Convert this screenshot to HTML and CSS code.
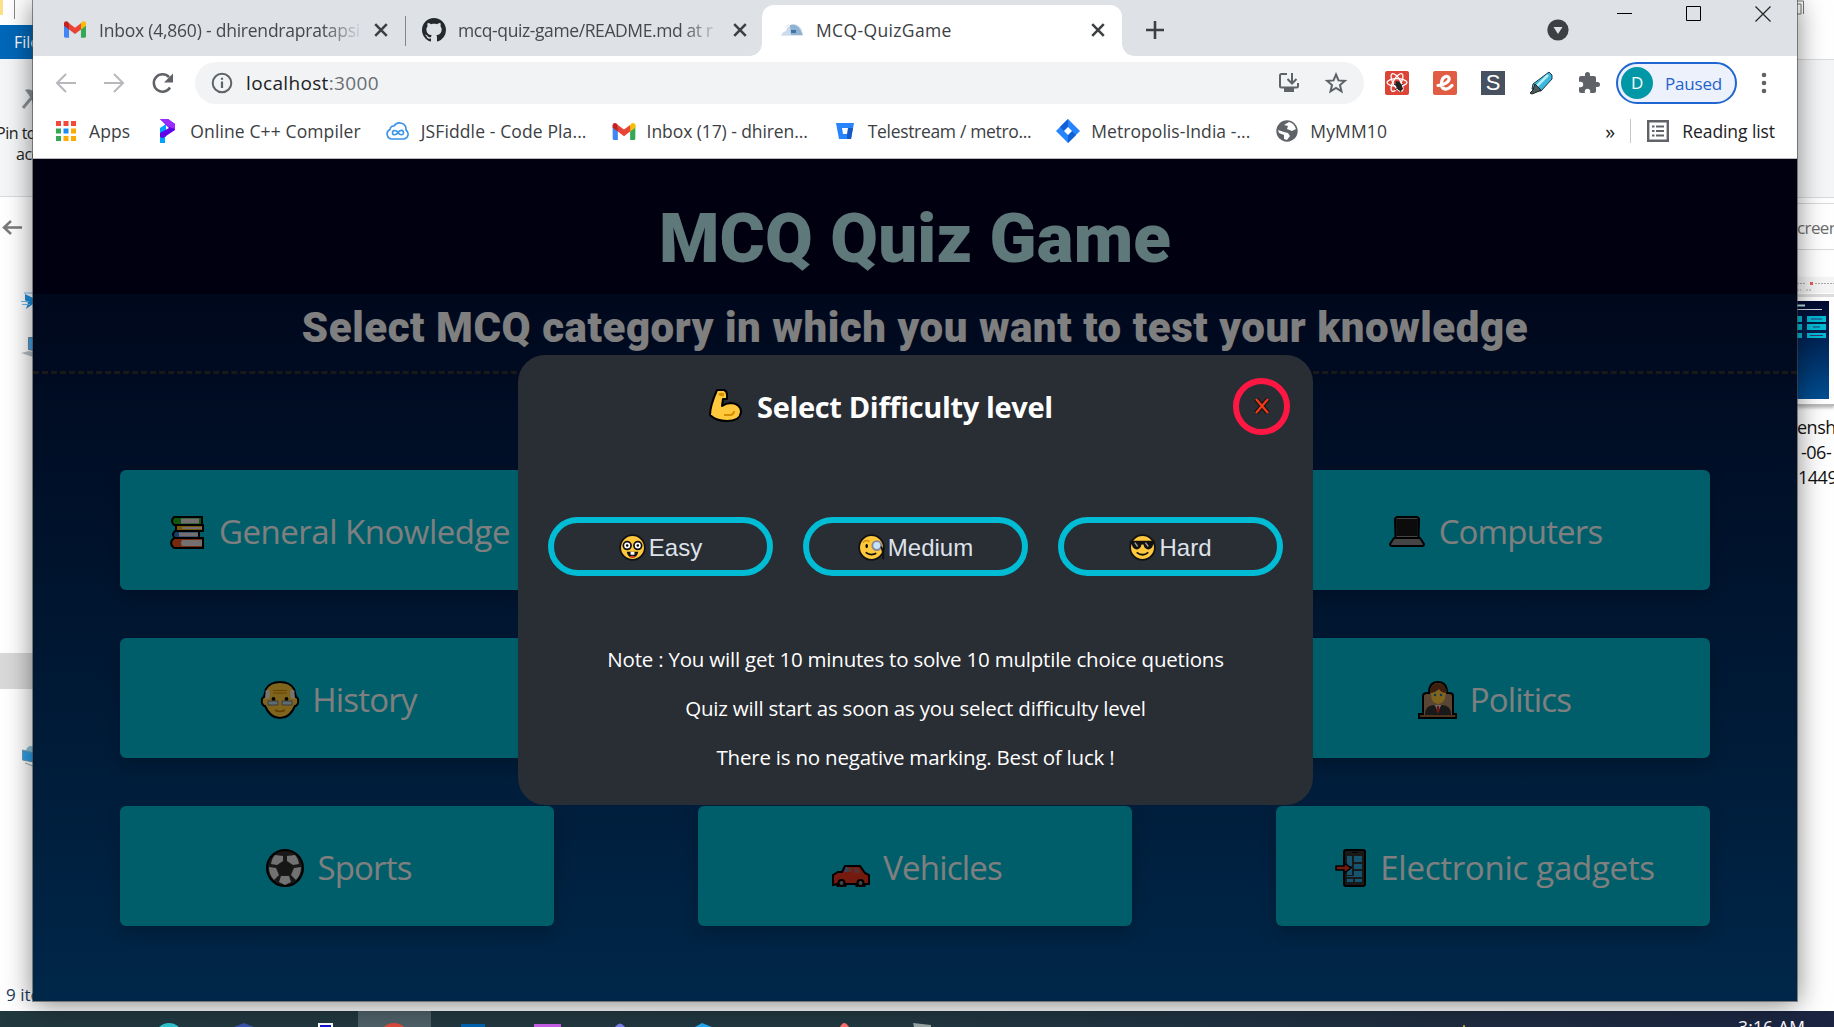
FILE: index.html
```html
<!DOCTYPE html>
<html lang="en">
<head>
<meta charset="utf-8">
<title>MCQ-QuizGame</title>
<link rel="stylesheet" href="styles.css">
</head>
<body>
<svg class="defs" width="0" height="0">
  <symbol id="gmail" viewBox="0 0 24 18">
    <path d="M0 2v14.400q0 1.600 1.600 1.600H5.500V6z" fill="#4285f4"/>
    <path d="M24 2v14.400q0 1.600-1.600 1.600H18.500V6z" fill="#34a853"/>
    <path d="M18.500 2.200V9L24 4.900V2.500C24 .2 21.500-.7 19.600.7z" fill="#fbbc04"/>
    <path d="M5.500 9V2.200L12 7l6.500-4.800V9L12 13.900z" fill="#ea4335"/>
    <path d="M0 2.500v2.400L5.500 9V2.200L4.400.7C2.500-.7 0 .2 0 2.500z" fill="#c5221f"/>
  </symbol>
  <symbol id="cross" viewBox="0 0 14 14"><path d="M2.500 2.500l9 9M11.500 2.500l-9 9" stroke="#3c4043" stroke-width="2" fill="none"/></symbol>
</svg>
<div class="desktop">
  <div class="explorer-left">
    <div class="quickbar"><i class="folder"></i><i class="tick"></i></div>
    <div class="filetab">File</div>
    <div class="ribbon">
      <svg width="33" height="36" viewBox="0 0 33 36"><path d="M23 31l10-12" stroke="#8a9399" stroke-width="3" fill="none"/><path d="M25 13q4-2 8 1v13q-2-7-8-14z" fill="#8a9399"/></svg>
      <span class="pin">Pin to</span><span class="acc">acc</span>
    </div>
    <svg class="sidebar" width="33" height="814" viewBox="0 197 33 814">
      <path d="M22 227.500H5M11 221l-7 6.500 7 6.500" stroke="#7a7a7a" stroke-width="2.500" fill="none"/>
      <path d="M25 294l8 4v6l-7 5 2-6-3-3z" fill="#1e90dd"/><path d="M24 293h9M21 301.500h8M22 304.500h8" stroke="#6dbcf0"/>
      <path d="M28.500 337.500h5v13l-5-1z" fill="#41a5ee" stroke="#6c8592"/><path d="M21 353l8-2 4 1v5z" fill="#b8bfc6"/>
      <path d="M0 653h33v36H0z" fill="#d9d9d9"/>
      <circle cx="31" cy="751" r="5" fill="#8cc6dc"/><path d="M22.500 750l11 3v9l-11-2z" fill="#2f9fe8" stroke="#6f9ab8"/><path d="M25 763l8 3" stroke="#99aaaa"/>
    </svg>
    <div class="count">9 items</div>
  </div>
  <div class="explorer-right">
    <div class="er-title"><svg width="9" height="18" viewBox="0 0 9 18"><path d="M0 1h6.500v13M0 4h4v10H0" stroke="#777" fill="none"/></svg></div>
    <div class="er-ribbon"></div>
    <div class="er-search">creen</div>
    <div class="er-thumb">
      <svg width="37" height="124" viewBox="0 0 37 124">
        <defs><linearGradient id="tg" x2="0" y2="1"><stop offset="0" stop-color="#000a30"/><stop offset="1" stop-color="#004e92"/></linearGradient></defs>
        <path d="M0 0h37v16H0z" fill="#f5f5f5"/><path d="M0 6.500h9M18 6.500h19M0 13h4M9 13h6" stroke="#aaa" stroke-dasharray="2 1"/><path d="M13 5h3v3h-3z" fill="#e06055"/><path d="M0 17h37v3H0z" fill="#ddd"/>
        <path d="M0 24h32v98H0z" fill="url(#tg)"/><path d="M0 28.500h8" stroke="#bfe6ea" stroke-width="2"/><path d="M0 32.500h25" stroke="#ddd"/>
        <path d="M0 39h5v6H0zM0 47h5v6H0zM0 56h5v5H0zM10 39h19v6H10zM10 47h19v6H10zM10 56h19v5H10z" fill="#00bcd4"/>
        <path d="M14 42h11M16 50h7M13 58.500h13" stroke="#333377"/>
      </svg>
    </div>
    <div class="er-name">ensh<br><span class="ind4">-06-</span><br><span class="ind1">1449</span></div>
  </div>

  <div class="taskbar">
    <svg width="1600" height="16" viewBox="0 0 1600 16">
      <path d="M358 0h73v16h-73z" fill="#4e6068"/>
      <circle cx="169" cy="26" r="14" fill="#2fc5cf"/><path d="M234 16l10-4 10 4z" fill="#3a55b0"/>
      <path d="M318 12h15v4h-15z" fill="#fff"/><path d="M320 14h11v2h-11z" fill="#1111cc"/>
      <circle cx="394" cy="27" r="15" fill="#db4a3c"/>
      <path d="M461 13h24v3h-24z" fill="#0063b1"/><path d="M534 13h27v3h-27z" fill="#c75fe8"/>
      <path d="M615 16q5-7 10 0z" fill="#7a7ff0"/><path d="M695 16l7-4 10 4z" fill="#23a9f2"/>
      <path d="M840 16q4-8 9 0z" fill="#ff6f6f"/><path d="M913 12l18 2v2h-17z" fill="#9aa5a5"/><path d="M1463 14h2v2h-2z" fill="#a5a52a"/>
    </svg>
    <span class="clock">3:16 AM</span>
  </div>

  <div class="browser">
    <div class="tabs">
      <div class="tab tab-mail">
        <svg width="22" height="17"><use href="#gmail"/></svg>
        <span class="label fade">Inbox (4,860) - dhirendrapratapsi</span>
        <svg class="x" width="18" height="18"><use href="#cross"/></svg>
      </div>
      <div class="tab tab-git">
        <svg width="24" height="24" viewBox="0 0 16 16"><path fill="#24292e" d="M8 0C3.580 0 0 3.580 0 8c0 3.540 2.290 6.530 5.470 7.590.4.070.55-.17.55-.38 0-.19-.01-.82-.01-1.490-2.010.37-2.530-.49-2.690-.94-.09-.23-.48-.94-.82-1.130-.28-.15-.68-.52-.01-.53.63-.01 1.080.58 1.230.82.72 1.210 1.870.87 2.330.66.07-.52.28-.87.51-1.070-1.780-.2-3.640-.89-3.640-3.950 0-.87.31-1.590.82-2.150-.08-.2-.36-1.020.08-2.120 0 0 .67-.21 2.200.82.64-.18 1.320-.27 2-.27s1.360.09 2 .27c1.530-1.040 2.200-.82 2.200-.82.44 1.100.16 1.920.08 2.120.51.56.82 1.270.82 2.150 0 3.070-1.870 3.750-3.650 3.950.29.25.54.73.54 1.480 0 1.070-.01 1.930-.01 2.200 0 .21.15.46.55.38A8 8 0 0 0 16 8c0-4.420-3.580-8-8-8z"/></svg>
        <span class="label fade">mcq-quiz-game/README.md at r</span>
        <svg class="x" width="18" height="18"><use href="#cross"/></svg>
      </div>
      <div class="tab active">
        <svg width="22" height="14" viewBox="0 0 22 14"><path d="M0 13q1-4 5-5 2-7 8-7 8 1 9 12z" fill="#cbdbe9"/><path d="M9 2q8-2 12 8l1 3H10z" fill="#8fb2d0"/><path d="M10 7h5v3h-5z" fill="#3d73a8"/><path d="M4 5l4-4M0 12.500h22" stroke="#dfe8f0"/></svg>
        <span class="label">MCQ-QuizGame</span>
        <svg class="x" width="18" height="18"><use href="#cross"/></svg>
      </div>
      <svg class="plus" width="18" height="18" viewBox="0 0 18 18"><path d="M9 0v18M0 9h18" stroke="#3c4043" stroke-width="2.600"/></svg>
      <svg class="drop" width="22" height="22" viewBox="0 0 22 22"><circle cx="11" cy="11" r="10.600" fill="#3c4043"/><path d="M6.500 8h9L11 15z" fill="#dee1e6"/></svg>
      <div class="winbtns">
        <svg width="16" height="16" viewBox="0 0 16 16"><path d="M0 7.500h15" stroke="#000"/></svg>
        <svg width="16" height="16" viewBox="0 0 16 16"><path d="M.5.5h14v14H.5z" stroke="#000" fill="none"/></svg>
        <svg width="16" height="16" viewBox="0 0 16 16"><path d="M.5.5l15 15M15.500.5l-15 15" stroke="#222" stroke-width="1.200"/></svg>
      </div>
    </div>

    <div class="toolbar">
      <svg width="28" height="28" viewBox="0 0 28 28"><path d="M24 14H5M14 5l-9 9 9 9" stroke="#b6b8bb" stroke-width="2" fill="none"/></svg>
      <svg width="28" height="28" viewBox="0 0 28 28"><path d="M4 14h19M14 5l9 9-9 9" stroke="#b6b8bb" stroke-width="2" fill="none"/></svg>
      <svg width="28" height="28" viewBox="0 0 28 28"><path d="M22 18.500A8.700 8.700 0 1 1 21 8.200" stroke="#5f6368" stroke-width="2.500" fill="none"/><path d="M25 4.500v9h-9z" fill="#5f6368"/></svg>
      <div class="omnibox">
        <svg width="22" height="22" viewBox="0 0 22 22"><circle cx="11" cy="11" r="9.300" stroke="#5f6368" stroke-width="2" fill="none"/><path d="M11 9.500V16M11 5.800v2" stroke="#5f6368" stroke-width="2.200"/></svg>
        <span class="url">localhost<span>:3000</span></span>
        <svg class="install" width="22" height="22" viewBox="0 0 22 22"><path d="M9 2H3.500Q2 2 2 3.500V14q0 1.500 1.500 1.500h15Q20 15.500 20 14v-3" stroke="#5f6368" stroke-width="2" fill="none"/><path d="M6 16h10v4H6z" fill="#5f6368"/><path d="M14 1v9.500M9.500 7l4.500 4.500L18.500 7" stroke="#5f6368" stroke-width="2" fill="none"/></svg>
        <svg width="24" height="24" viewBox="0 0 24 24"><path d="M12 3.500l2.500 5.900 6.400.5-4.900 4.200 1.500 6.300L12 17l-5.500 3.400L8 14.100 3.100 9.900l6.400-.5z" stroke="#5f6368" stroke-width="2" fill="none"/></svg>
      </div>
      <div class="exts">
        <svg width="24" height="24" viewBox="0 0 24 24"><rect width="24" height="24" rx="2" fill="#db4437"/><g fill="none" stroke="#fff" stroke-width="1.300"><ellipse cx="12" cy="11.500" rx="10" ry="3.800"/><ellipse cx="12" cy="11.500" rx="10" ry="3.800" transform="rotate(60 12 11.500)"/><ellipse cx="12" cy="11.500" rx="10" ry="3.800" transform="rotate(120 12 11.500)"/></g><ellipse cx="14" cy="15" rx="2.800" ry="5" fill="#222" transform="rotate(-25 14 15)"/><path d="M9 13l9 5M10 19l8-6M11 10l5 11" stroke="#222"/></svg>
        <svg width="24" height="24" viewBox="0 0 24 24"><rect width="24" height="24" rx="2" fill="#e05d44"/><path d="M5 14.500C12 14 17 10 16 7c-1-3-7-2-7.500 5C8 19 14 20 19 14.500" stroke="#fff" stroke-width="3.200" fill="none" stroke-linecap="round"/></svg>
        <span class="ext-s">S</span>
        <svg width="24" height="24" viewBox="0 0 24 24"><path d="M20 1l3 3v4L12 20H8l-5-2 1-5z" fill="#39b8dc" stroke="#223344"/><path d="M19 4L8 15" stroke="#b9edf8" stroke-width="2.500"/><path d="M6 13l6 6-4 2-5 2-2-1 3-3z" fill="#4a5b5f" stroke="#222"/></svg>
        <svg width="24" height="24" viewBox="0 0 24 24"><path fill="#5f6368" d="M20.500 11H19V7c0-1.100-.9-2-2-2h-4V3.500a2.500 2.500 0 0 0-5 0V5H4c-1.100 0-2 .9-2 2v3.800h1.500a2.700 2.700 0 0 1 0 5.400H2V20c0 1.100.9 2 2 2h3.800v-1.500a2.700 2.700 0 0 1 5.400 0V22H17c1.100 0 2-.9 2-2v-4h1.500a2.500 2.500 0 0 0 0-5z"/></svg>
      </div>
      <div class="profile"><b>D</b><span>Paused</span></div>
      <svg class="dots" width="24" height="24" viewBox="0 0 24 24"><g fill="#5f6368"><circle cx="12" cy="4" r="2.300"/><circle cx="12" cy="12" r="2.300"/><circle cx="12" cy="20" r="2.300"/></g></svg>
    </div>

    <div class="bookmarks">
      <a><svg width="24" height="24" viewBox="0 0 24 24"><path d="M2 2h5v5H2zM9.500 2h5v5h-5zM17 2h5v5h-5z" fill="#f4483b"/><path d="M2 9.500h5v5H2zM2 17h5v5H2z" fill="#34a853"/><path d="M9.500 9.500h5v5h-5z" fill="#1a8cf0"/><path d="M17 9.500h5v5h-5zM9.500 17h5v5h-5zM17 17h5v5h-5z" fill="#fbab04"/></svg><span class="ls1">Apps</span></a>
      <a><svg width="24" height="24" viewBox="0 0 24 24"><path d="M5 9l6-4v13l-1 0v6H5z" fill="#00a2ff"/><path d="M5 0h8l7 5v6L8 19l-3-1v-4l9-5z" fill="#6200ea"/><path d="M5 0h8l7 5v5l-6-2z" fill="#9a2bff"/></svg><span class="ls1">Online C++ Compiler</span></a>
      <a><svg width="24" height="24" viewBox="0 0 24 24"><path d="M6.500 20a5 5 0 0 1-2.500-9.500 3.500 3.500 0 0 1 4-3.500 6.500 6.500 0 0 1 12 4A5 5 0 0 1 18 20z" fill="none" stroke="#3b94e8" stroke-width="1.600"/><path d="M12 13.500c-2-3-5.500-2.500-5.500.2s3.500 3 5.500-.2 5.500-2.600 5.500.2-3.500 2.800-5.500-.2z" fill="none" stroke="#3b94e8" stroke-width="1.600"/></svg><span class="ls1">JSFiddle - Code Pla...</span></a>
      <a><svg width="24" height="17"><use href="#gmail"/></svg><span class="ls2">Inbox (17) - dhiren...</span></a>
      <a><svg width="24" height="24" viewBox="0 0 24 24"><path d="M3 4h18l-3 16H6z" fill="#2684ff"/><path d="M14 9h6l-2 11h-4z" fill="#1558c8"/><path d="M9 9h6l-1 6h-4z" fill="#fff"/></svg><span class="ls3">Telestream / metro...</span></a>
      <a><svg width="24" height="24" viewBox="0 0 24 24"><path d="M12 0l12 12-12 12L0 12z" fill="#2684ff"/><path d="M12 0v8l-4 4-4-4z" fill="#1060d8"/><path d="M12 24v-8l4-4 4 4z" fill="#1060d8"/><path d="M12 8l4 4-4 4-4-4z" fill="#fff"/></svg><span class="ls4">Metropolis-India -...</span></a>
      <a><svg width="24" height="24" viewBox="0 0 24 24"><circle cx="12" cy="12" r="10.700" fill="#5f6368"/><path d="M14 3q5 1 7 7l-4 2-5-2 1-3-4-1zM3 11l6 2 4 1 2 3-3 4-3-1v-4l-5-2z" fill="#fff"/></svg><span class="ls1">MyMM10</span></a>
      <div class="bm-end"><span class="more">»</span><i></i><svg width="22" height="22" viewBox="0 0 22 22"><path d="M1.200 1.200h19.600v19.600H1.200z" stroke="#5f6368" stroke-width="2.400" fill="none"/><path d="M5 6.500h2.500M9 6.500h8M5 11h2.500M9 11h8M5 15.500h2.500M9 15.500h8" stroke="#5f6368" stroke-width="2.200"/></svg><span class="ls2">Reading list</span></div>
    </div>

    <main class="page">
      <h1>MCQ Quiz Game</h1>
      <h2>Select MCQ category in which you want to test your knowledge</h2>
      <div class="grid">
        <div class="card wide"><svg class="emo" viewBox="0 0 46 38"><g stroke="#000" stroke-width="2"><path d="M10 4h28v8H10q-4-4 0-8z" fill="#1fae1f"/><path d="M12 12h27v6H12z" fill="#f2b200"/><path d="M11 18h24v7H11q-4-3 0-7z" fill="#2d7fd8"/><path d="M10 25h29v10H10q-6-5 0-10z" fill="#e8541a"/></g><path d="M17 5.500h18v5H17zM18 14h20v2H18zM15 19.500h19v4H15zM18 27h20v6H18q-2-3 0-6z" fill="#e8e0e4"/></svg><span>General Knowledge</span></div>
        <div class="card"></div>
        <div class="card"><svg class="emo" viewBox="0 0 46 38"><path d="M11 6h24M11 6l1 17h22l1-17z" fill="#222" stroke="#000" stroke-width="2"/><path d="M12 5.500h22v18H12z" fill="#191919" stroke="#888"/><path d="M11.500 24V6q0-2 2-2h19q2 0 2 2v18" fill="none" stroke="#000" stroke-width="2"/><path d="M10 25h26l4 6q0 2-2 2H8q-2 0-2-2z" fill="#8a8a8a" stroke="#000" stroke-width="2"/></svg><span>Computers</span></div>
        <div class="card"><svg class="emo" viewBox="0 0 46 38"><path d="M23 1q10 0 14 7l2 8q3 1 2 6-1 3-3 3-5 12-15 12T8 25q-2 0-3-3-1-5 2-6l2-8Q13 1 23 1z" fill="#ffc83d" stroke="#000" stroke-width="2"/><path d="M8.500 18V10q1-2 4-1v8zM37.500 18V10q-1-2-4-1v8z" fill="#e8e8e8"/><path d="M16 9.500h14M16 12h14" stroke="#cf8a00"/><circle cx="16.500" cy="18" r="1.900"/><circle cx="29.500" cy="18" r="1.900"/><path d="M11 20h10v4H11zM25 20h10v4H25z" fill="#bcd9ec" stroke="#777"/><path d="M18 29q5 3 10 0" stroke="#c07a00" stroke-width="1.500" fill="none"/></svg><span>History</span></div>
        <div class="card"></div>
        <div class="card"><svg class="emo" viewBox="0 0 46 38"><path d="M8 15q0-3 4-3h2Q14 1 23 1t9 11h2q4 0 4 3v18h3v4H4v-4h4z" fill="#b08a66" stroke="#000" stroke-width="2"/><path d="M16 12Q16 2 23 2t8 10q-1 11-8 11t-7-11z" fill="#ffc83d"/><path d="M15 12Q15 2 23 2t9 10q-6 0-8-4-4 4-9 4z" fill="#7b3f20"/><circle cx="20" cy="14" r="1.200" fill="#136fb8"/><circle cx="26" cy="14" r="1.200" fill="#136fb8"/><path d="M10 34q0-10 9-10l4 4 4-4q9 0 9 10z" fill="#333"/><path d="M20 24h6l-3 8z" fill="#ddd"/><path d="M22 25h2l.5 5-1.500 2-1.500-2z" fill="#e22222"/><path d="M5 35h36" stroke="#8a4a1a"/></svg><span>Politics</span></div>
        <div class="card"><svg class="emo" viewBox="0 0 46 38"><circle cx="23" cy="19" r="18" fill="#333" stroke="#000" stroke-width="2"/><path d="M13 6l8 1v5l-6 4-6-1q1-6 4-9zM33 6l-8 1v5l6 4 6-1q-1-6-4-9zM7 18l7 1 3 7-5 5q-5-5-5-13zM39 18l-7 1-3 7 5 5q5-5 5-13zM19 27h8l2 6-6 3-6-3z" fill="#e4e4e4"/><path d="M23 12l7 5-3 8h-8l-3-8z" fill="#2c2c2c"/></svg><span>Sports</span></div>
        <div class="card"><svg class="emo" viewBox="0 0 46 38"><path d="M5 36V26l5-3h4l3-6h15l5 7 4 2v9h-4a4.500 4.500 0 0 1-9 0H18a4.500 4.500 0 0 1-9 0z" fill="#e8341c" stroke="#000" stroke-width="2"/><path d="M17 23l2-4h5v4zM26 19h4l3 5h-7z" fill="#b06060"/><path d="M16 23l2-5h2l-1 5z" fill="#6688cc"/><circle cx="13.500" cy="34" r="3" fill="#888" stroke="#000" stroke-width="2"/><circle cx="32.500" cy="34" r="3" fill="#888" stroke="#000" stroke-width="2"/></svg><span>Vehicles</span></div>
        <div class="card wider"><svg class="emo" viewBox="0 0 46 38"><rect x="16" y="1" width="21" height="36" rx="2" fill="#333" stroke="#000" stroke-width="2"/><path d="M19 7h5v10h-5zM26 7h8v6h-8zM19 19h5v7h-5zM26 15h8v5h-8zM26 22h8v6H19v-1h7zM19 30h6v3h-6zM27 30h7v3h-7z" fill="#2aa9dc"/><path d="M24 3.500h6" stroke="#000"/><path d="M8 17h8v-3l7 5-7 5v-3H8z" fill="#e8341c" stroke="#000" stroke-width="1.500"/></svg><span>Electronic gadgets</span></div>
      </div>
      <div class="scrim"></div>
      <section class="modal">
        <div class="modal-head">
          <svg width="36" height="36" viewBox="0 0 36 36"><path d="M9 2h7q3 1 3 5v4h-4L14 18q4-3 9-3 10 1 10 9-1 9-14 9Q8 33 2 27 2 18 9 2z" fill="#ffc83d" stroke="#000" stroke-width="2" stroke-linejoin="round"/><path d="M10 6q3-2 6-1v3q-4 1-6-2z" fill="#d68f00"/><path d="M16 27h7q3-1 3-4" stroke="#d68f00" stroke-width="2" fill="none"/></svg>
          <h3>Select Difficulty level</h3>
          <button class="close"><svg width="16" height="16" viewBox="0 0 16 16"><path d="M2 1l12 14M14 1L2 15" stroke="#111" stroke-width="4.500"/><path d="M2 1l12 14M14 1L2 15" stroke="#f03a17" stroke-width="2.400"/></svg></button>
        </div>
        <div class="levels">
          <button><svg width="27" height="27" viewBox="0 0 28 28"><circle cx="14" cy="14" r="12.800" fill="#ffc83d" stroke="#111" stroke-width="1.800"/><circle cx="8.500" cy="12" r="4" fill="#fff" stroke="#111" stroke-width="1.800"/><circle cx="19.500" cy="12" r="4" fill="#fff" stroke="#111" stroke-width="1.800"/><circle cx="8.500" cy="12" r="1.300"/><circle cx="19.500" cy="12" r="1.300"/><path d="M8 18.500h12q-1 6-6 6t-6-6z" fill="#111"/><path d="M12 18.500h4v3h-4z" fill="#fff"/><path d="M11 23.500q3-2 6 0-3 2-6 0z" fill="#ee3333"/></svg><span>Easy</span></button>
          <button><svg width="27" height="27" viewBox="0 0 28 28"><circle cx="14" cy="14" r="12.800" fill="#ffc83d" stroke="#111" stroke-width="1.800"/><circle cx="19.500" cy="12" r="4.600" fill="#c5e4f5" stroke="#888899" stroke-width="2"/><path d="M24 13q3 6 2 13" stroke="#111" stroke-width="2" fill="none"/><ellipse cx="9" cy="12.500" rx="1.300" ry="2.200"/><path d="M5 9q3-4 7-1" stroke="#d68f00" stroke-width="1.500" fill="none"/><path d="M8 19q5 4 11 1" stroke="#111" stroke-width="1.800" fill="none"/></svg><span>Medium</span></button>
          <button><svg width="27" height="27" viewBox="0 0 28 28"><circle cx="14" cy="14" r="12.800" fill="#ffc83d" stroke="#111" stroke-width="1.800"/><path d="M1 7h26v3l-2 1q-1 5-5 5-4 0-5-5h-2q-1 5-5 5-4 0-5-5l-2-1z" fill="#111"/><path d="M6 9l3 4M17 9l3 4" stroke="#999" stroke-width="1.500"/><path d="M8 19q6 5 12 0" stroke="#111" stroke-width="1.800" fill="none"/></svg><span>Hard</span></button>
        </div>
        <div class="notes">
          <p>Note : You will get 10 minutes to solve 10 mulptile choice quetions</p>
          <p>Quiz will start as soon as you select difficulty level</p>
          <p>There is no negative marking. Best of luck !</p>
        </div>
      </section>
    </main>
  </div>
</div>
</body>
</html>
```
FILE: styles.css
```css
* { box-sizing: border-box; }
body { margin: 0; font-family: "Open Sans", "Noto Sans", sans-serif; }
svg { display: block; flex: none; }
.defs { position: absolute; }
h1, h2, h3, p { margin: 0; }

.desktop { position: relative; width: 1834px; height: 1027px; overflow: hidden; background: #fff; }

/* file explorer behind the browser */
.explorer-left { position: absolute; left: 0; top: 0; width: 80px; height: 1011px; overflow: hidden; font-size: 17px; white-space: nowrap; }
.quickbar { height: 25px; display: flex; justify-content: space-between; width: 15px; }
.folder { width: 3px; height: 15px; background: #ffe08a; }
.tick { width: 1px; height: 19px; background: #888; }
.filetab { height: 34px; background: #0067b8; color: #fff; padding-left: 14px; font-size: 16px; line-height: 35px; }
.ribbon { height: 138px; background: #f5f6f7; border-bottom: 1px solid #dadbdc; padding-top: 18px; display: flex; flex-direction: column; color: #222; font-size: 16px; letter-spacing: -.5px; }
.pin { margin-left: -4px; line-height: 22px; margin-top: 9px; }
.acc { margin-left: 16px; line-height: 20px; }
.count { position: absolute; left: 6px; top: 982px; line-height: 26px; color: #1e395b; }

.explorer-right { position: absolute; left: 1797px; top: 0; width: 37px; height: 1011px; overflow: hidden; white-space: nowrap; }
.er-title { height: 59px; }
.er-ribbon { height: 139px; background: #f5f6f7; border-top: 1px solid #dadbdc; border-bottom: 1px solid #dadbdc; }
.er-search { margin-top: 5px; height: 47px; border-top: 1px solid #d9d9d9; border-bottom: 1px solid #d9d9d9; color: #6d6d6d; font-size: 17px; line-height: 48px; letter-spacing: -.6px; }
.er-thumb { margin-top: 27px; height: 129px; border-bottom: 2px solid #bbb; box-shadow: 0 2px 3px #bbb; }
.er-name { margin-top: 9px; font-size: 18px; line-height: 25px; color: #111; letter-spacing: -.5px; }
.ind4 { padding-left: 4px; }
.ind1 { padding-left: 1px; }

.taskbar { position: absolute; left: 0; top: 1011px; width: 1834px; height: 16px; overflow: hidden; background: linear-gradient(90deg, #21383f 0%, #213740 50%, #1e2c40 78%, #1b2542 100%); display: flex; }
.clock { margin-left: 138px; margin-top: 4px; color: #fff; font-size: 17.500px; line-height: 24px; white-space: nowrap; letter-spacing: .15px; }

/* browser window */
.browser { position: absolute; left: 33px; top: 0; width: 1764px; height: 1001px; background: #fff; box-shadow: 0 0 0 1px rgba(70,70,70,.6), 0 3px 26px rgba(0,0,0,.5); display: flex; flex-direction: column; overflow: hidden; }
.tabs { height: 56px; background: #dee1e6; display: flex; align-items: flex-start; }
.tab { height: 51px; margin-top: 5px; padding-bottom: 2px; display: flex; align-items: center; font-size: 17.500px; color: #45494d; white-space: nowrap; }
.tab-mail { width: 373px; padding-left: 31px; position: relative; }
.tab-mail::after { content: ""; position: absolute; right: 0; top: 11px; width: 1px; height: 30px; background: #80868b; }
.tab-git { width: 356px; padding-left: 16px; }
.label { margin-left: 12px; letter-spacing: -.4px; }
.tab-mail .label { margin-left: 13px; width: 265px; letter-spacing: -.22px; }
.fade { width: 265px; overflow: hidden; -webkit-mask-image: linear-gradient(90deg, #000 84%, transparent 100%); mask-image: linear-gradient(90deg, #000 84%, transparent 100%); }
.x { margin-left: 8px; }
.active { position: relative; width: 360px; background: #fff; border-radius: 12px 12px 0 0; padding: 0 15px 2px 19px; color: #3c4043; }
.active::before, .active::after { content: ""; position: absolute; bottom: 0; width: 12px; height: 12px; }
.active::before { left: -12px; background: radial-gradient(circle at 0 0, transparent 11.500px, #fff 12px); }
.active::after { right: -12px; background: radial-gradient(circle at 100% 0, transparent 11.500px, #fff 12px); }
.active .label { margin-left: 13px; letter-spacing: .36px; }
.active .x { margin-left: auto; }
.plus { margin: 21px 0 0 24px; }
.drop { margin: 19px 0 0 383px; }
.winbtns { display: flex; gap: 53px; margin: 6px 0 0 48px; }

.toolbar { height: 54px; padding-left: 19px; display: flex; align-items: center; gap: 20px; }
.omnibox { margin-left: -1px; width: 1169px; height: 42px; border-radius: 21px; background: #f1f3f4; display: flex; align-items: center; padding: 0 16px; }
.url { margin-left: 13px; font-size: 19px; letter-spacing: .35px; color: #202124; white-space: nowrap; }
.url span { color: #6a6e73; }
.install { margin-left: auto; margin-right: 24px; }
.exts { display: flex; gap: 24px; margin-left: 1px; }
.ext-s { width: 24px; height: 24px; background: #475160; color: #fff; font: 22px/24px "Liberation Sans", sans-serif; text-align: center; }
.profile { margin-left: -5px; width: 121px; height: 42px; border: 2px solid #1f66d0; border-radius: 21px; background: #ecf1fb; display: flex; align-items: center; padding-left: 3px; color: #1f62cf; font-size: 17px; letter-spacing: -.2px; }
.profile b { width: 32px; height: 32px; border-radius: 50%; background: #0097a7; color: #fff; font-weight: 400; text-align: center; line-height: 32px; margin-right: 12px; }
.dots { margin-left: -5px; }

.bookmarks { height: 49px; padding: 0 0 6px 21px; display: flex; align-items: center; gap: 25px; font-size: 17.500px; color: #3c4043; white-space: nowrap; border-bottom: 1px solid #b9bbbe; }
.bookmarks a, .bm-end { display: flex; align-items: center; gap: 11px; }
.bm-end { margin-left: auto; margin-right: 22px; color: #202124; gap: 13px; }
.bm-end i { width: 1px; height: 24px; background: #c5c8cc; margin-left: 2px; margin-right: 3px; }
.more { font-size: 20px; }
.ls1 { letter-spacing: .12px; }
.ls2 { letter-spacing: -.08px; }
.ls3 { letter-spacing: -.33px; }
.ls4 { letter-spacing: .05px; }

/* quiz page */
.page { position: relative; flex: 1; background: linear-gradient(#000428, #004e92); }
h1 { height: 135px; padding-top: 12px; background: #000020; color: #bff2f6; text-align: center; font: 900 69px/135px Roboto, sans-serif; letter-spacing: .2px; white-space: nowrap; }
h2 { height: 80px; border-bottom: 3px dashed #333; color: #fff; text-align: center; font: 900 42px/68px Roboto, sans-serif; letter-spacing: .56px; white-space: nowrap; }
.grid { display: grid; grid-template-columns: repeat(3, 434px); column-gap: 144px; row-gap: 48px; padding: 96px 0 0 87px; }
.card { height: 120px; border-radius: 6px; background: #00bcd4; box-shadow: 0 8px 18px rgba(0,0,0,.2); display: flex; align-items: center; justify-content: center; gap: 9px; padding-top: 3px; color: #fff; font-size: 33px; letter-spacing: -.82px; white-space: nowrap; }
.wide { letter-spacing: -.5px; }
.wider { letter-spacing: -.28px; gap: 6px; padding-right: 3px; }
.emo { width: 46px; height: 38px; }
.scrim { position: absolute; inset: 0; background: rgba(0,0,0,.5); }

.modal { position: absolute; left: 485px; top: 196px; width: 795px; height: 450px; border-radius: 27px; background: #292d34; color: #fff; }
.modal-head { height: 102px; display: flex; align-items: center; padding-left: 190px; padding-right: 23px; }
h3 { margin-left: 13px; font-size: 29px; font-weight: 700; letter-spacing: -.34px; white-space: nowrap; }
.close { margin-left: auto; width: 57px; height: 57px; border: 6px solid #ff1744; border-radius: 50%; background: none; padding: 0; display: flex; align-items: center; justify-content: center; }
.levels { display: flex; justify-content: space-between; padding: 60px 30px 0; }
.levels button { width: 225px; height: 59px; border: 6px solid #00bcd4; border-radius: 30px; background: none; color: #dee2ea; font: 24px "Liberation Sans", sans-serif; display: flex; align-items: center; justify-content: center; gap: 3px; padding: 2px 0 0; }
.notes { padding-top: 59px; text-align: center; font-size: 20.500px; line-height: 49px; letter-spacing: -.21px; }
```
